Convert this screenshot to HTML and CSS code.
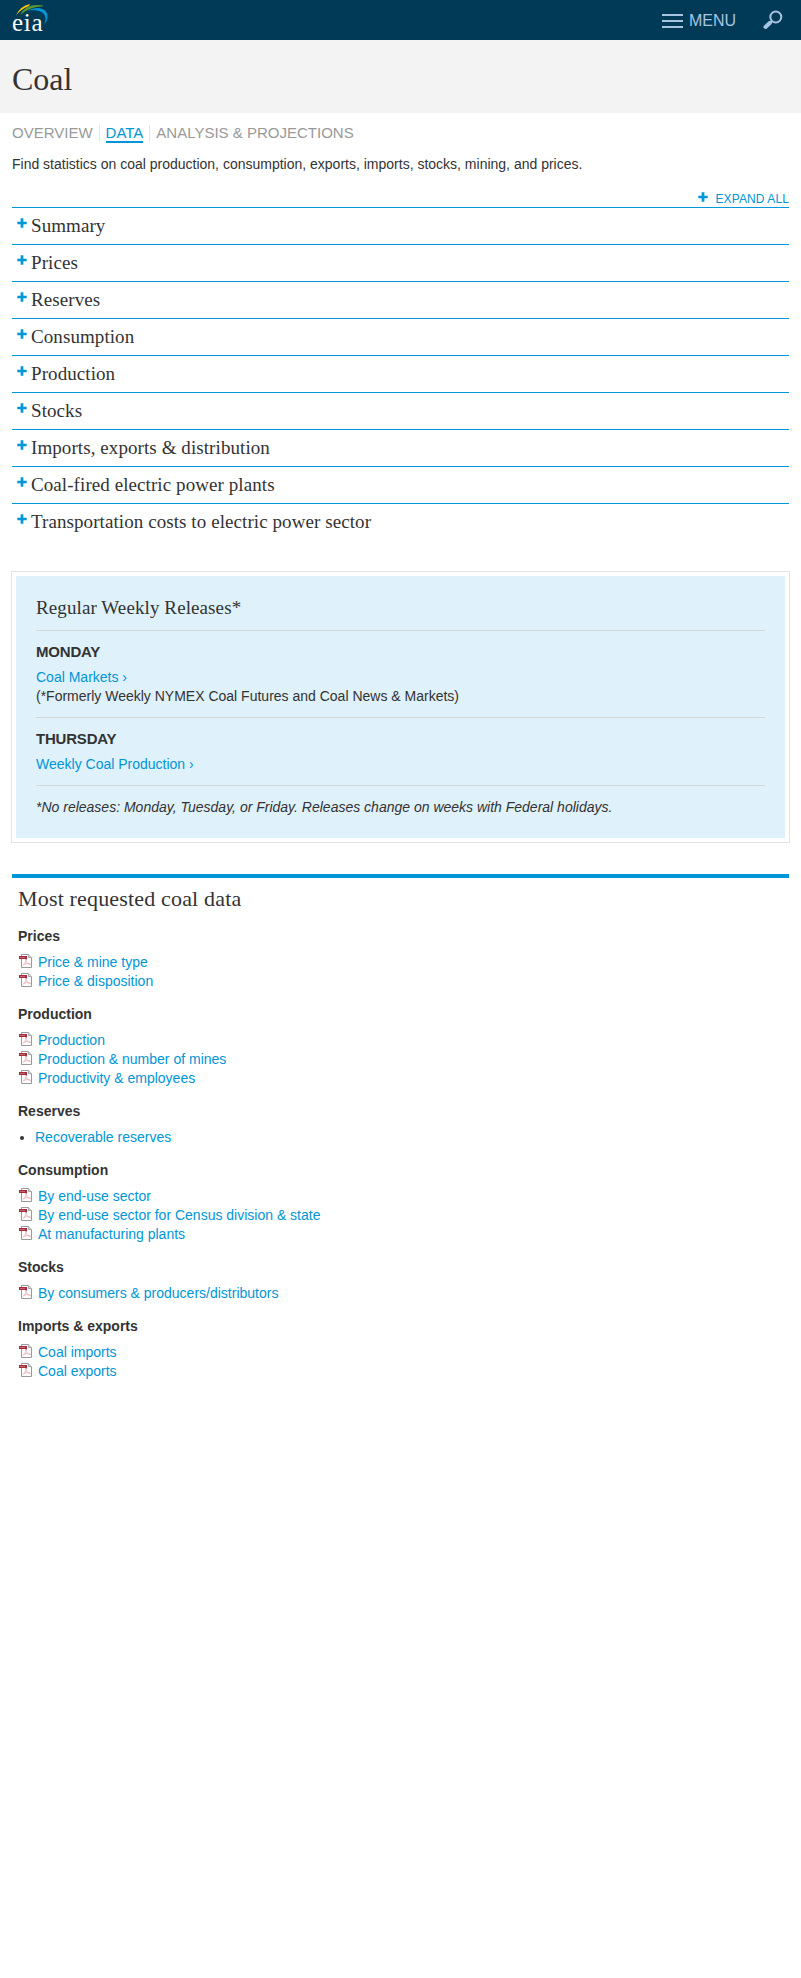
FILE: index.html
```html
<!DOCTYPE html>
<html lang="en">
<head>
<meta charset="utf-8">
<title>Coal Data - EIA</title>
<link rel="stylesheet" href="styles.css">
</head>
<body>
<svg width="0" height="0" class="defs" aria-hidden="true">
  <symbol id="pdf" viewBox="0 0 14 15">
    <path d="M2.500 4V.5H9.500L12.500 3.500V13.500H2.500V5" fill="none" stroke="#999"/>
    <path d="M9.500 .5V3.500H12.500" fill="#ddd" stroke="#aaa"/>
    <path d="M7 5.500C7 8.500 5 11 3.500 12M7 6.500C7.500 8.500 9 10.500 12 10.500M4.500 10.500C7 9.500 9 9.500 11 9.700" fill="none" stroke="#e8b5ba" stroke-width=".9"/>
    <path d="M0 2H8V5.500H6.500V5H0Z" fill="#a72b3b"/>
    <path d="M1 3.500H6" stroke="#c98088" stroke-width=".7"/>
  </symbol>
  <symbol id="plus" viewBox="0 0 10 10"><path d="M5 .3V9.700M.3 5H9.700" stroke="#0096d7" stroke-width="2.700"/></symbol>
</svg>
<header class="top">
  <a class="logo" href="#">
    <svg class="swoosh" width="36" height="22" viewBox="0 0 36 22"><path d="M4 11.500Q8 2 18 0L17 2Q9 5 4 11.500Z" fill="#ffc702"/><path d="M8 11Q14 -1 31 1.500V2.300Q17 3 8 11Z" fill="#5d9732"/><path d="M15 6.500Q28 1 34 7.500Q38 14 32 21Q35.500 13.500 31 9Q25 4.500 15 6.500Z" fill="#0096d7"/></svg>
    <span>eia</span>
  </a>
  <nav class="tools">
    <span class="burger"><i></i><i></i><i></i></span>
    <span class="menu">MENU</span>
    <svg class="search" width="20" height="20" viewBox="0 0 20 20" fill="none" stroke="#a8c4e0"><circle cx="12.800" cy="7" r="5.500" stroke-width="2"/><path d="M8.800 11L7 12.800" stroke-width="2"/><path d="M7 12.800L2.500 17" stroke-width="4" stroke-linecap="round"/></svg>
  </nav>
</header>
<div class="banner"><h1>Coal</h1></div>
<main>
  <nav class="tabs"><a>OVERVIEW</a><i></i><a class="on">DATA</a><i></i><a>ANALYSIS &amp; PROJECTIONS</a></nav>
  <p class="intro">Find statistics on coal production, consumption, exports, imports, stocks, mining, and prices.</p>
  <div class="expand"><svg class="plus"><use href="#plus"/></svg><a>EXPAND ALL</a></div>
  <ul class="rows">
    <li><svg class="plus"><use href="#plus"/></svg>Summary</li>
    <li><svg class="plus"><use href="#plus"/></svg>Prices</li>
    <li><svg class="plus"><use href="#plus"/></svg>Reserves</li>
    <li><svg class="plus"><use href="#plus"/></svg>Consumption</li>
    <li><svg class="plus"><use href="#plus"/></svg>Production</li>
    <li><svg class="plus"><use href="#plus"/></svg>Stocks</li>
    <li><svg class="plus"><use href="#plus"/></svg>Imports, exports &amp; distribution</li>
    <li><svg class="plus"><use href="#plus"/></svg>Coal-fired electric power plants</li>
    <li><svg class="plus"><use href="#plus"/></svg>Transportation costs to electric power sector</li>
  </ul>
  <section class="releases">
    <div class="inner">
      <h2>Regular Weekly Releases*</h2>
      <div class="day"><h3>MONDAY</h3><a>Coal Markets ›</a><p>(*Formerly Weekly NYMEX Coal Futures and Coal News &amp; Markets)</p></div>
      <div class="day"><h3>THURSDAY</h3><a>Weekly Coal Production ›</a></div>
      <p class="note">*No releases: Monday, Tuesday, or Friday. Releases change on weeks with Federal holidays.</p>
    </div>
  </section>
  <section class="requested">
    <h2>Most requested coal data</h2>
    <h4>Prices</h4>
    <ul><li><svg class="pdf"><use href="#pdf"/></svg><a>Price &amp; mine type</a></li><li><svg class="pdf"><use href="#pdf"/></svg><a>Price &amp; disposition</a></li></ul>
    <h4>Production</h4>
    <ul><li><svg class="pdf"><use href="#pdf"/></svg><a>Production</a></li><li><svg class="pdf"><use href="#pdf"/></svg><a>Production &amp; number of mines</a></li><li><svg class="pdf"><use href="#pdf"/></svg><a>Productivity &amp; employees</a></li></ul>
    <h4>Reserves</h4>
    <ul><li class="dot"><i></i><a>Recoverable reserves</a></li></ul>
    <h4>Consumption</h4>
    <ul><li><svg class="pdf"><use href="#pdf"/></svg><a>By end-use sector</a></li><li><svg class="pdf"><use href="#pdf"/></svg><a>By end-use sector for Census division &amp; state</a></li><li><svg class="pdf"><use href="#pdf"/></svg><a>At manufacturing plants</a></li></ul>
    <h4>Stocks</h4>
    <ul><li><svg class="pdf"><use href="#pdf"/></svg><a>By consumers &amp; producers/distributors</a></li></ul>
    <h4>Imports &amp; exports</h4>
    <ul><li><svg class="pdf"><use href="#pdf"/></svg><a>Coal imports</a></li><li><svg class="pdf"><use href="#pdf"/></svg><a>Coal exports</a></li></ul>
  </section>
</main>
</body>
</html>
```
FILE: styles.css
```css
* { box-sizing: border-box; margin: 0; padding: 0; }
body { background: #fff; color: #333; font: 14px/19px "Liberation Sans", Arial, sans-serif; min-height: 1978px; }
ul { list-style: none; }
.defs { position: absolute; }
.top { height: 40px; background: #003a57; display: flex; justify-content: space-between; }
.logo { position: relative; padding: 8px 0 0 12px; color: #fff; font: 25px/30px "Liberation Serif", serif; text-decoration: none; }
.swoosh { position: absolute; left: 12px; top: 4px; }
.logo span { position: relative; letter-spacing: .7px; }
.tools { display: flex; padding-right: 18px; color: #a8c4e0; }
.burger { display: grid; gap: 4px; width: 21px; height: 14px; margin-top: 14px; }
.burger i { height: 2px; background: #a8c4e0; }
.menu { font-size: 16px; line-height: 42px; margin-left: 6px; height: 40px; }
.search { margin: 10px 0 0 27px; }
.banner { height: 73px; background: #f3f3f3; padding: 19px 12px; }
h1, h2 { font-family: "Liberation Serif", "Times New Roman", serif; font-weight: normal; }
h1 { font-size: 32px; line-height: 40px; }
main { padding: 0 12px; }
.tabs { display: flex; font-size: 15px; color: #999; padding-top: 11px; height: 43px; }
.tabs a { height: 19px; line-height: 18px; }
.tabs i { width: 1px; height: 17px; margin: 1px 6px 0; background: #e5e5e5; }
.tabs .on { color: #0096d7; border-bottom: 2px solid #0096d7; }
.intro { height: 36px; line-height: 17px; }
.expand { display: flex; justify-content: flex-end; gap: 8px; height: 15px; font-size: 12px; line-height: 14px; letter-spacing: .1px; color: #0096d7; }
.plus { width: 10px; height: 10px; flex: none; }
.rows li { display: flex; height: 37px; border-top: 1px solid #0096d7; padding-left: 5px; gap: 4px; font: 19px/36px "Liberation Serif", serif; letter-spacing: .08px; }
.rows .plus { margin-top: 10px; }
.releases { margin: 31px -1px; border: 1px solid #e3e3e3; padding: 4px; height: 272px; }
.inner { height: 262px; background: #dff1fb; padding: 20px; }
.inner h2 { font-size: 19px; letter-spacing: .1px; line-height: 24px; height: 35px; border-bottom: 1px solid #d6d6d6; }
.day { border-bottom: 1px solid #d6d6d6; padding: 11px 0; }
h3 { font-size: 15px; letter-spacing: -.2px; line-height: 20px; margin-bottom: 6px; }
a { color: inherit; }
.day a, .requested a { color: #0096d7; display: block; }
.note { font-style: italic; padding-top: 12px; }
.requested { border-top: 4px solid #0096d7; padding: 7px 6px 0; }
.requested h2 { font-size: 22px; letter-spacing: .17px; line-height: 28px; margin-bottom: 14px; }
.requested h4 { font-size: 14px; margin-bottom: 7px; }
.requested ul { margin-bottom: 14px; }
.requested li { display: flex; gap: 5px; height: 19px; margin-left: 1px; }
.pdf { width: 14px; height: 15px; margin-top: 1px; flex: none; }
.requested .dot { gap: 11px; }
.dot i { width: 4px; height: 4px; border-radius: 50%; background: #333; margin: 8px 0 0 1px; }
```
